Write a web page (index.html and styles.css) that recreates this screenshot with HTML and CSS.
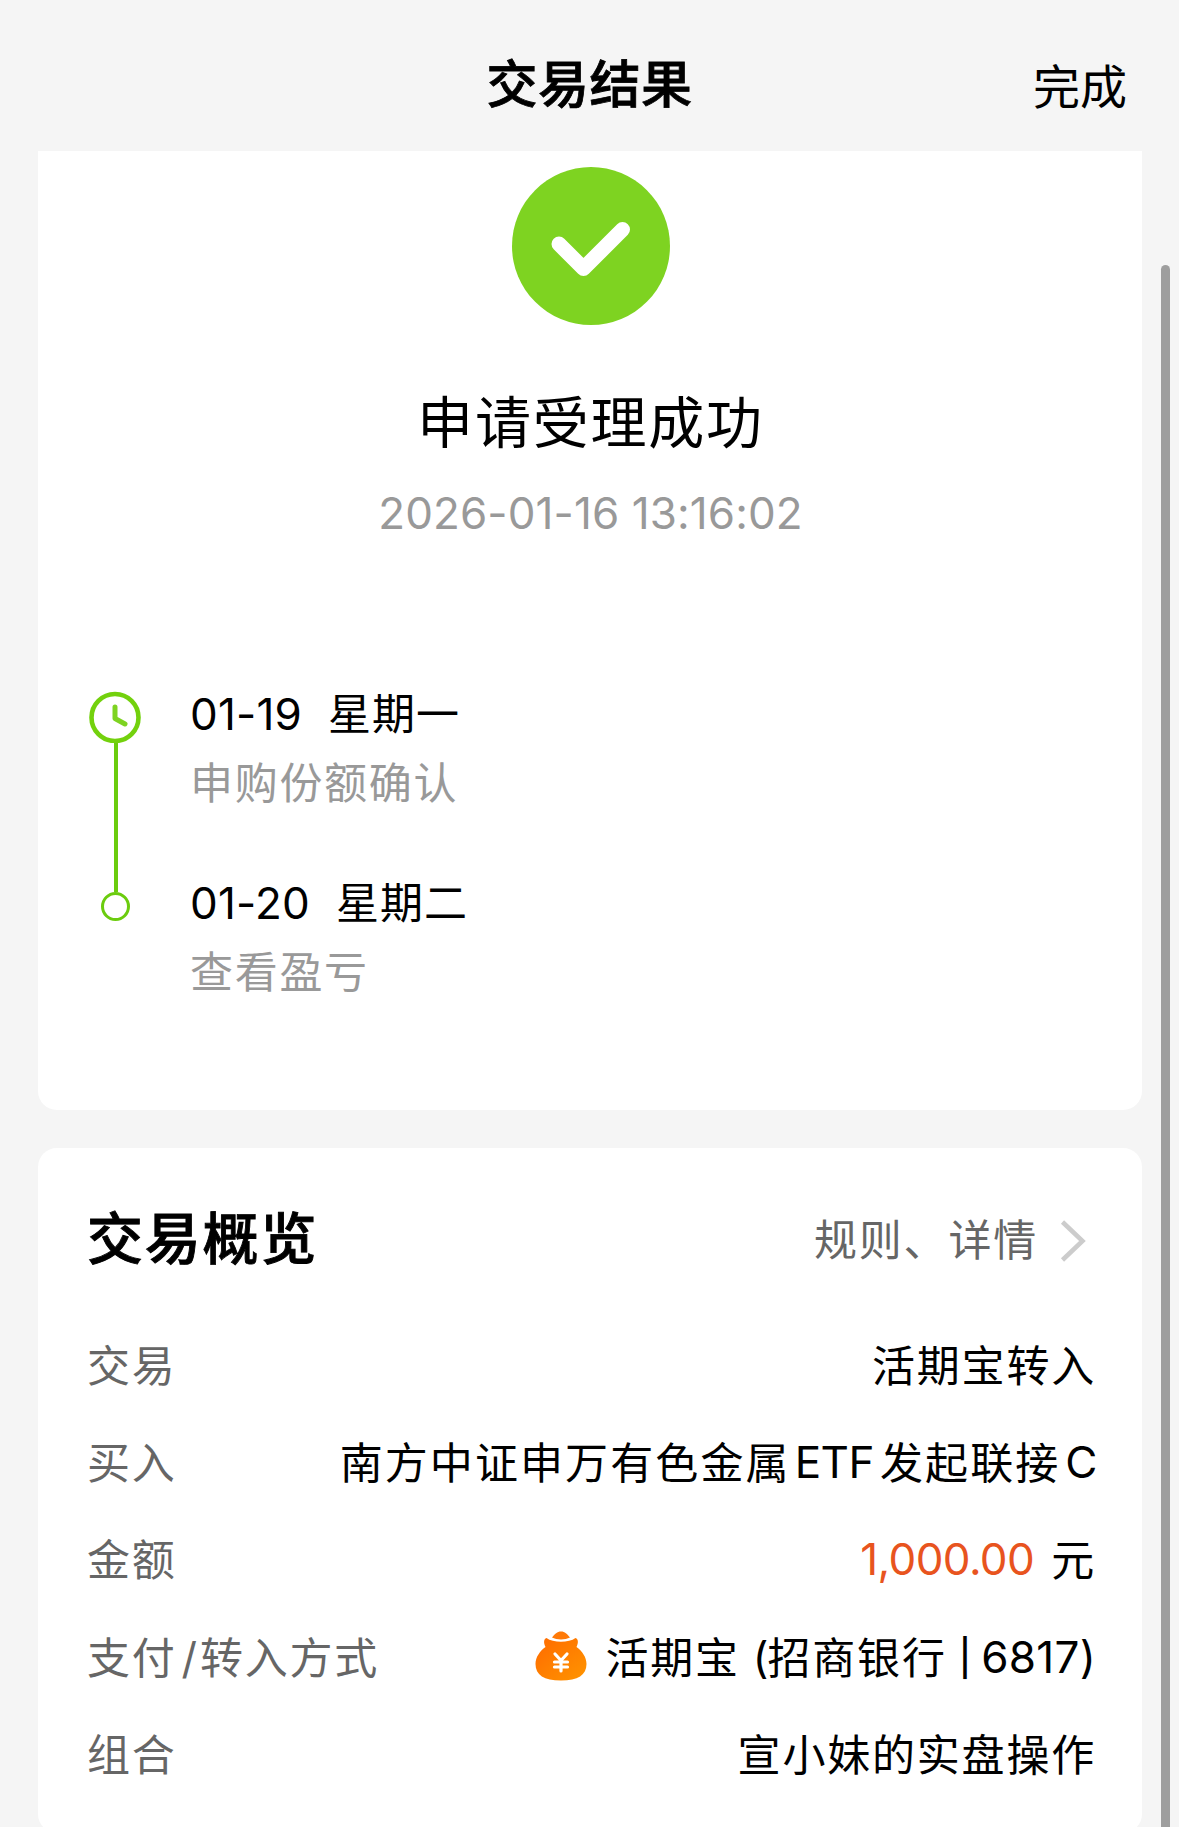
FILE: index.html
```html
<!DOCTYPE html>
<html lang="zh-CN">
<head>
    <meta charset="UTF-8">
    <meta name="viewport" content="width=device-width, initial-scale=1.0">
    <title>交易结果</title>
    <link rel="stylesheet" href="styles.css">
</head>
<body>
    <header class="header">
        <h1>交易结果</h1>
        <span class="done">完成</span>
    </header>
    <main class="content">
        <section class="card result">
            <svg class="success-icon" viewBox="0 0 158 158">
                <circle cx="79" cy="79" r="79" fill="#7ed321"/>
                <path d="M47 77 L71.500 101.500 L110.500 62.500" fill="none" stroke="#fff" stroke-width="15" stroke-linecap="round" stroke-linejoin="round"/>
            </svg>
            <h2 class="result-title">申请受理成功</h2>
            <p class="result-time">2026-01-16 13:16:02</p>
            <div class="timeline">
                <div class="track">
                    <svg class="clock" viewBox="0 0 52 52">
                        <circle cx="26" cy="26.500" r="23.500" fill="none" stroke="#73d10d" stroke-width="4.600"/>
                        <path d="M26 16 V27.500 L36 33" fill="none" stroke="#7ed321" stroke-width="5" stroke-linecap="round" stroke-linejoin="round"/>
                    </svg>
                    <div class="line"></div>
                    <div class="dot"></div>
                </div>
                <ul class="steps">
                    <li>
                        <p class="step-date"><span class="num">01-19</span><span class="weekday">星期一</span></p>
                        <p class="step-text">申购份额确认</p>
                    </li>
                    <li>
                        <p class="step-date"><span class="num">01-20</span><span class="weekday">星期二</span></p>
                        <p class="step-text">查看盈亏</p>
                    </li>
                </ul>
            </div>
        </section>
        <section class="card overview">
            <div class="overview-head">
                <h2>交易概览</h2>
                <div class="rules">
                    <span>规则、详情</span>
                    <svg class="chevron" viewBox="0 0 26 44">
                        <path d="M2.500 3 L22.500 22 L2.500 41" fill="none" stroke="#ccc" stroke-width="4.500"/>
                    </svg>
                </div>
            </div>
            <div class="row">
                <span class="label">交易</span>
                <span class="value">活期宝转入</span>
            </div>
            <div class="row">
                <span class="label">买入</span>
                <span class="value fund">南方中证申万有色金属<span class="latin">ETF</span>发起联接<span class="latin last">C</span></span>
            </div>
            <div class="row">
                <span class="label">金额</span>
                <span class="value"><span class="amount">1,000.00</span>元</span>
            </div>
            <div class="row">
                <span class="label">支付<span class="slash">/</span>转入方式</span>
                <span class="value">
                    <svg class="bag" viewBox="0 0 52 50">
                        <defs>
                            <linearGradient id="bagFill" x1="0" y1="0" x2="1" y2="1">
                                <stop offset="0" stop-color="#ff6a00"/>
                                <stop offset="1" stop-color="#ff9500"/>
                            </linearGradient>
                        </defs>
                        <path d="M17 6.500 C20 3 22 .5 26 .5 C30 .5 32 3 35 6.500 C30 9 22 9 17 6.500Z" fill="#ff7a08"/>
                        <path d="M11.500 7 C18 12 34 12 40.500 7 C43.500 8 43.500 12 41.500 16 C47 20 51.500 26 51.500 33 C51.500 44 43 49.500 26 49.500 C9 49.500 .5 44 .5 33 C.5 26 5 20 10.500 16 C8.500 12 8.500 8 11.500 7Z" fill="url(#bagFill)"/>
                        <path d="M20 23 L26 29.500 L32 23 M19.500 31 H32.500 M19.500 36 H32.500 M26 30 V40" fill="none" stroke="#fff" stroke-width="3.200" stroke-linecap="round"/>
                    </svg>
                    <span class="bank">活期宝</span><span class="paren">(</span>招商银行<span class="bar">|</span><span class="card-no">6817)</span>
                </span>
            </div>
            <div class="row">
                <span class="label">组合</span>
                <span class="value">宣小妹的实盘操作</span>
            </div>
        </section>
    </main>
    <div class="scrollbar"></div>
</body>
</html>
```
FILE: styles.css
```css
* {
    box-sizing: border-box;
    margin: 0;
    padding: 0;
}
body {
    height: 1827px;
    overflow: hidden;
    background-color: #f5f5f5;
    color: #000;
    font-family: Inter, "Noto Sans CJK SC", sans-serif;
    font-size: 43px;
    text-autospace: no-autospace;
}
.header {
    display: grid;
    grid-template-columns: 1fr auto 1fr;
    align-items: center;
    height: 151px;
    padding: 19px 52px 0;
}
.header h1 {
    grid-column: 2;
    font-size: 51px;
    font-weight: 500;
    line-height: 60px;
    letter-spacing: 0.5px;
    -webkit-text-stroke: 0.8px #000;
}
.done {
    justify-self: end;
    padding-top: 4px;
    font-size: 47px;
    line-height: 60px;
}
.content {
    display: flex;
    flex-direction: column;
    gap: 38px;
    padding: 0 37px 0 38px;
}
.card {
    background-color: #fff;
    border-radius: 19px;
}
.result {
    display: flex;
    flex-direction: column;
    align-items: center;
    height: 959px;
    padding: 16px 49px 0 50px;
    border-radius: 0 0 19px 19px;
}
.success-icon {
    width: 158px;
    height: 158px;
}
.result-title {
    margin-top: 63px;
    font-size: 56px;
    font-weight: 400;
    line-height: 70px;
    letter-spacing: 1.8px;
}
.result-time {
    margin-top: 29px;
    color: #999;
    font-size: 44px;
    line-height: 52px;
    letter-spacing: 0.1px;
}
.timeline {
    display: flex;
    align-self: stretch;
    margin-top: 152px;
}
.track {
    display: flex;
    flex-direction: column;
    align-items: center;
    width: 55px;
}
.clock {
    width: 52px;
    height: 52px;
    margin-right: 2px;
}
.line {
    width: 4px;
    height: 149px;
    background-color: #6bcc0e;
}
.dot {
    width: 29px;
    height: 29px;
    border: 3px solid #6bcc0e;
    border-radius: 50%;
}
.steps {
    margin-top: -1px;
    margin-left: 47px;
    list-style: none;
}
.steps li {
    height: 189px;
}
.step-date {
    display: flex;
    gap: 26px;
    height: 69px;
    line-height: 48px;
}
.num {
    font-size: 44px;
    letter-spacing: 0.2px;
}
.weekday {
    letter-spacing: 1px;
}
.step-text {
    color: #999;
    line-height: 48px;
    letter-spacing: 1.7px;
}
.overview {
    height: 685px;
    padding: 56px 48px 0 49px;
}
.overview-head {
    display: flex;
    justify-content: space-between;
    align-items: center;
    height: 70px;
    margin-bottom: 43px;
}
.overview-head h2 {
    font-size: 56px;
    font-weight: 500;
    letter-spacing: 1.8px;
    line-height: 70px;
    -webkit-text-stroke: 0.9px #000;
}
.rules {
    display: flex;
    align-items: center;
    gap: 22px;
    padding: 0 8px 4px 0;
    color: #666;
    letter-spacing: 1.8px;
}
.chevron {
    width: 26px;
    height: 44px;
    margin-top: 8px;
}
.row {
    display: flex;
    justify-content: space-between;
    align-items: center;
    height: 97.3px;
    letter-spacing: 1.8px;
    line-height: 60px;
}
.label {
    color: #666;
}
.value {
    display: flex;
    align-items: center;
    margin-right: -2px;
}
.fund {
    letter-spacing: 2.1px;
}
.latin {
    margin: 0 6px 2px 4px;
    font-size: 44px;
    letter-spacing: -0.5px;
}
.latin.last {
    margin-right: -1px;
    margin-left: 5px;
}
.slash {
    margin: 0 1px 0 5px;
}
.amount {
    margin-right: 17px;
    margin-bottom: 3px;
    color: #e8541e;
    font-size: 44px;
    letter-spacing: -0.6px;
}
.bag {
    width: 52px;
    height: 50px;
    margin-right: 18px;
    margin-bottom: 3px;
}
.paren {
    margin: 0 -1px 2px 13px;
    letter-spacing: 0;
}
.bar {
    margin: 0 10px 0 12px;
    font-size: 36px;
    font-weight: 500;
    letter-spacing: 0;
}
.card-no {
    margin-bottom: 2px;
    font-size: 44px;
    letter-spacing: 0.3px;
}
.scrollbar {
    position: absolute;
    top: 265px;
    right: 9px;
    width: 9px;
    height: 1562px;
    background-color: #9e9e9e;
    border-radius: 5px 5px 0 0;
}
```
